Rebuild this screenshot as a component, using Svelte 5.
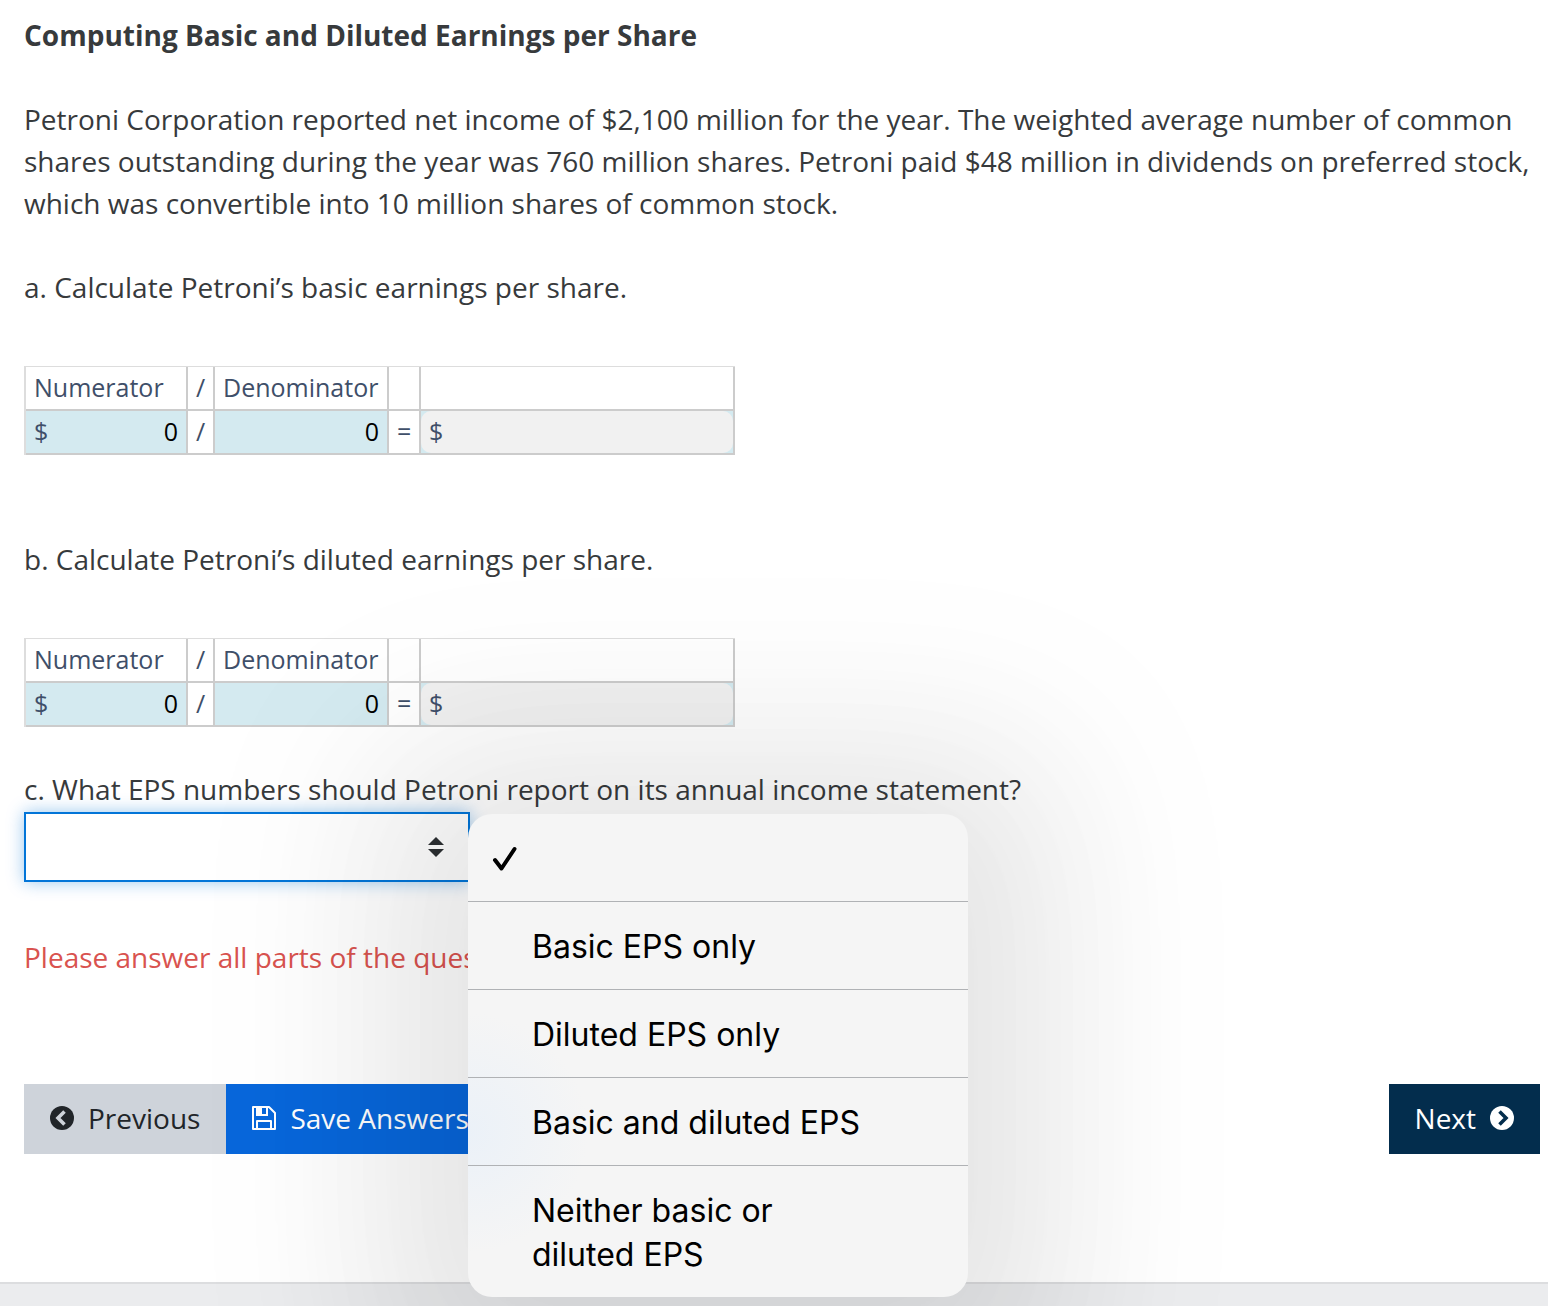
<script>
    const options = [
        '',
        'Basic EPS only',
        'Diluted EPS only',
        'Basic and diluted EPS',
        'Neither basic or diluted EPS'
    ];

    let parts = $state([
        { id: 'basic', text: 'a. Calculate Petroni’s basic earnings per share.', numerator: '0', denominator: '0', result: '' },
        { id: 'diluted', text: 'b. Calculate Petroni’s diluted earnings per share.', numerator: '0', denominator: '0', result: '' }
    ]);
    let answer = $state('');
    let open = $state(true);

    function choose(option) {
        answer = option;
        open = false;
    }

    function toggleMenu(event) {
        event.preventDefault();
        open = !open;
    }
</script>

<main class="question">
    <h1>Computing Basic and Diluted Earnings per Share</h1>

    <p>
        Petroni Corporation reported net income of $2,100 million for the year. The weighted average number of common
        shares outstanding during the year was 760 million shares. Petroni paid $48 million in dividends on preferred
        stock, which was convertible into 10 million shares of common stock.
    </p>

    {#each parts as part (part.id)}
        <section class="part">
            <p>{part.text}</p>
            <table>
                <colgroup>
                    <col class="col-numerator" />
                    <col class="col-slash" />
                    <col class="col-denominator" />
                    <col class="col-equals" />
                    <col class="col-result" />
                </colgroup>
                <tbody>
                    <tr>
                        <td>Numerator</td>
                        <td>/</td>
                        <td>Denominator</td>
                        <td></td>
                        <td></td>
                    </tr>
                    <tr>
                        <td class="entry">
                            <label>$<input aria-label="Numerator" bind:value={part.numerator} /></label>
                        </td>
                        <td>/</td>
                        <td class="entry">
                            <label><input aria-label="Denominator" bind:value={part.denominator} /></label>
                        </td>
                        <td>=</td>
                        <td class="entry">
                            <label class="result">$<input aria-label="Earnings per share" value={part.result} readonly /></label>
                        </td>
                    </tr>
                </tbody>
            </table>
        </section>
    {/each}

    <section class="choice">
        <label for="report">c. What EPS numbers should Petroni report on its annual income statement?</label>
        <div class="picker">
            <select id="report" bind:value={answer} onmousedown={toggleMenu}>
                {#each options as option}
                    <option value={option}>{option}</option>
                {/each}
            </select>
            <svg class="arrows" viewBox="0 0 16 20" aria-hidden="true">
                <path d="M8 0 16 8H0zM8 20 0 12h16z" />
            </svg>
            {#if open}
                <div class="menu" role="listbox" aria-label="Answers">
                    {#each options as option}
                        <button type="button" role="option" aria-label={option || 'No answer'} aria-selected={option === answer} onclick={() => choose(option)}>
                            {#if option === answer}
                                <svg class="check" viewBox="0 0 26 26" aria-hidden="true">
                                    <path d="M3 14 9.500 22.500 22.500 3" />
                                </svg>
                            {/if}
                            <span>{option}</span>
                        </button>
                    {/each}
                </div>
            {/if}
        </div>
    </section>

    <p class="warning">Please answer all parts of the question.</p>

    <nav class="actions">
        <button type="button" class="previous">
            <svg viewBox="0 0 24 24" aria-hidden="true">
                <circle cx="12" cy="12" r="12" fill="currentColor" />
                <path d="M14.500 5.500 8 12l6.500 6.500" fill="none" stroke="#ced3da" stroke-width="3.600" />
            </svg>
            Previous
        </button>
        <button type="button" class="save">
            <svg viewBox="0 0 24 24" aria-hidden="true">
                <path d="M1 1h16l6 6v16H1z" fill="none" stroke="currentColor" stroke-width="2" stroke-linejoin="round" />
                <path d="M4 1h12v9H4zM10 2v6h4V2z" fill="currentColor" fill-rule="evenodd" />
                <path d="M5 23v-8h14v8" fill="none" stroke="currentColor" stroke-width="2" stroke-linejoin="round" />
            </svg>
            Save Answers
        </button>
        <button type="button" class="next">
            Next
            <svg viewBox="0 0 24 24" aria-hidden="true">
                <circle cx="12" cy="12" r="12" fill="currentColor" />
                <path d="M9.500 5.500 16 12l-6.500 6.500" fill="none" stroke="#032d4d" stroke-width="3.600" />
            </svg>
        </button>
    </nav>
</main>
<footer></footer>

<style>
    :global(body) {
        background: #fff;
        color: #373a3c;
        font-family: "Open Sans", "Noto Sans", sans-serif;
        font-size: 28px;
        line-height: 42px;
    }

    .question {
        padding: 14px 8px 128px 24px;
    }

    h1 {
        margin: 0 0 42px;
        font-size: 28px;
        line-height: 42px;
        font-weight: 700;
    }

    p {
        margin: 0 0 42px;
    }

    .part {
        margin-bottom: 83px;
    }

    .part + .part {
        margin-bottom: 41px;
    }

    .part p {
        margin-bottom: 58px;
    }

    table {
        box-sizing: border-box;
        width: 711px;
        table-layout: fixed;
        border-collapse: separate;
        border-spacing: 0;
        border-left: 2px solid #ddd;
        border-top: 1px solid #ddd;
        color: #3f4f69;
        font-size: 25px;
        line-height: 40px;
    }

    .col-numerator {
        width: 162px;
    }

    .col-slash {
        width: 27px;
    }

    .col-denominator {
        width: 174px;
    }

    .col-equals {
        width: 32px;
    }

    td {
        box-sizing: border-box;
        height: 44px;
        padding: 0 8px 2px;
        border-right: 2px solid #ccc;
        border-bottom: 2px solid #ccc;
        white-space: nowrap;
    }

    .entry {
        padding: 0;
        background: #d4eaf0;
    }

    .entry label {
        display: flex;
        box-sizing: border-box;
        height: 42px;
        padding: 0 8px 2px;
    }

    .entry .result {
        border-radius: 10px;
        background: #f1f1f1;
    }

    input {
        flex: 1;
        min-width: 0;
        padding: 0;
        border: 0;
        outline: 0;
        background: transparent;
        color: #000;
        font: inherit;
        text-align: right;
    }

    .choice label {
        display: block;
    }

    .picker {
        position: relative;
        width: 446px;
        margin: 2px 0 54px;
    }

    select {
        display: block;
        box-sizing: border-box;
        width: 100%;
        height: 70px;
        padding: 0 56px 0 24px;
        border: 2px solid #0275d8;
        border-radius: 0;
        outline: 0;
        appearance: none;
        background: #fff;
        box-shadow: 0 0 16px rgba(2, 117, 216, 0.4);
        color: inherit;
        font: inherit;
    }

    .arrows {
        position: absolute;
        top: 25px;
        right: 26px;
        width: 16px;
        height: 20px;
        fill: #2d3033;
        pointer-events: none;
    }

    .menu {
        position: absolute;
        z-index: 10;
        top: 2px;
        left: 444px;
        width: 500px;
        overflow: hidden;
        border-radius: 24px;
        background: radial-gradient(circle at 0 66%, #ebf1f8, rgba(235, 241, 248, 0) 120px) #f5f5f5;
        box-shadow:
            0 20px 160px 70px rgba(0, 0, 0, 0.07),
            0 20px 200px 130px rgba(0, 0, 0, 0.04);
    }

    .menu button {
        position: relative;
        display: block;
        width: 100%;
        min-height: 88px;
        padding: 23px 96px 20px 64px;
        border: 0;
        border-bottom: 1px solid #b0b2b5;
        background: transparent;
        color: #000;
        font-family: Inter, "Liberation Sans", sans-serif;
        font-size: 32px;
        line-height: 44px;
        text-align: left;
    }

    .menu button:last-child {
        border-bottom: 0;
    }

    .check {
        position: absolute;
        top: 32px;
        left: 24px;
        width: 26px;
        height: 26px;
        fill: none;
        stroke: #000;
        stroke-width: 4;
        stroke-linecap: round;
        stroke-linejoin: round;
    }

    .warning {
        margin-bottom: 106px;
        color: #d9534f;
    }

    .actions {
        display: flex;
    }

    .actions button {
        display: flex;
        align-items: center;
        gap: 14px;
        height: 70px;
        padding: 0 26px 2px;
        border: 0;
        color: #fff;
        font: inherit;
    }

    .actions svg {
        width: 24px;
        height: 24px;
    }

    .actions .previous {
        background: #ced3da;
        color: #212529;
    }

    .actions .save {
        background: #0867db;
    }

    .actions .next {
        margin-left: auto;
        background: #032d4d;
    }

    footer {
        box-sizing: border-box;
        height: 24px;
        border-top: 2px solid #dcdddf;
        background: #ebecee;
    }
</style>
